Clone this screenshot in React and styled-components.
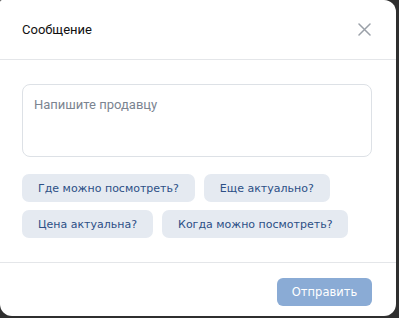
import React from "react";
import styled, { createGlobalStyle } from "styled-components";

const Global = createGlobalStyle`
  html, body {
    margin: 0;
    padding: 0;
    background: #2f2f2f;
  }
  * { box-sizing: border-box; }
`;

const Modal = styled.div`
  width: 396px;
  height: 316px;
  background: #ffffff;
  border-radius: 2px 12px 12px 12px;
  display: flex;
  flex-direction: column;
  overflow: hidden;
`;

const Header = styled.div`
  height: 60px;
  display: flex;
  align-items: center;
  justify-content: space-between;
  padding: 0 25px 1px 22px;
  border-bottom: 1px solid #e4e6e9;
`;

const Title = styled.h2`
  margin: 0;
  font-family: Roboto, "Liberation Sans", sans-serif;
  font-size: 13px;
  font-weight: 400;
  color: #111111;
`;

const Close = styled.button`
  border: 0;
  background: none;
  padding: 0;
  width: 14px;
  height: 14px;
  display: flex;
  align-items: center;
  justify-content: center;
  cursor: pointer;
`;

const Body = styled.div`
  padding: 24px 24px 24px 22px;
  border-bottom: 1px solid #e4e6e9;
`;

const Field = styled.textarea`
  display: block;
  width: 100%;
  height: 73px;
  resize: none;
  border: 1px solid #dde1e6;
  border-radius: 8px;
  padding: 12px 11px;
  font-family: Roboto, "Liberation Sans", sans-serif;
  font-size: 13px;
  color: #222;
  outline: none;
  &::placeholder {
    color: #7b8491;
  }
`;

const Chips = styled.div`
  margin-top: 17px;
  display: flex;
  flex-wrap: wrap;
  gap: 8px 9px;
`;

const Chip = styled.button`
  height: 28px;
  padding: 0 16px;
  border: 0;
  border-radius: 7px;
  background: #e5eaf1;
  color: #2c4f86;
  font-family: "DejaVu Sans", Verdana, sans-serif;
  font-size: 11px;
  cursor: pointer;
`;

const Footer = styled.div`
  flex: 1;
  display: flex;
  justify-content: flex-end;
  align-items: flex-start;
  padding: 15px 24px 0 0;
`;

const Send = styled.button`
  height: 28px;
  width: 95px;
  border: 0;
  border-radius: 6px;
  background: #8aabd5;
  color: #ffffff;
  font-family: "DejaVu Sans", Verdana, sans-serif;
  font-size: 11.5px;
`;

const hints = [
  "Где можно посмотреть?",
  "Еще актуально?",
  "Цена актуальна?",
  "Когда можно посмотреть?",
];

export default function App() {
  return (
    <>
      <Global />
      <Modal>
        <Header>
          <Title>Сообщение</Title>
          <Close aria-label="Закрыть">
            <svg width="13" height="13" viewBox="0 0 13 13">
              <path d="M1 1L12 12M12 1L1 12" stroke="#9aa0a8" strokeWidth="1.5" strokeLinecap="round" />
            </svg>
          </Close>
        </Header>
        <Body>
          <Field placeholder="Напишите продавцу" />
          <Chips>
            {hints.map((h) => (
              <Chip key={h}>{h}</Chip>
            ))}
          </Chips>
        </Body>
        <Footer>
          <Send>Отправить</Send>
        </Footer>
      </Modal>
    </>
  );
}
